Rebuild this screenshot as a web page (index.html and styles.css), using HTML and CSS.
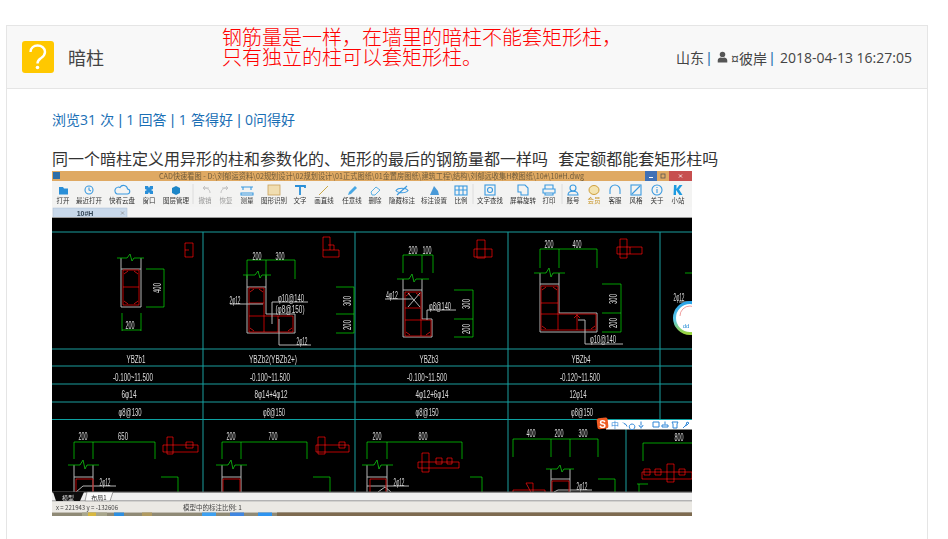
FILE: index.html
```html
<!DOCTYPE html>
<html lang="zh-CN">
<head>
    <meta charset="UTF-8">
    <meta name="viewport" content="width=device-width, initial-scale=1.0">
    <title>暗柱</title>
    <link rel="stylesheet" href="styles.css">
</head>
<body>
    <div class="panel">
        <div class="panel-heading">
            <svg class="q-icon" viewBox="0 0 32 32">
                <rect width="32" height="32" rx="3" fill="#ffc800"/>
                <path d="M8.5 11C8.5 6.5 12 4.5 15.5 4.5C19.5 4.5 23 7 23 11C23 14.5 20.5 16 18.5 17.5C16.5 19 15.5 20 15.5 22.5" fill="none" stroke="#fff" stroke-width="2.4"/>
                <circle cx="15.5" cy="26.5" r="1.8" fill="#fff"/>
            </svg>
            <h1 class="title">暗柱</h1>
            <div class="note">钢筋量是一样，在墙里的暗柱不能套矩形柱，<br>只有独立的柱可以套矩形柱。</div>
            <div class="meta">
                <span>山东</span><span class="bar">|</span>
                <svg class="user-icon" viewBox="0 0 12 12">
                    <circle cx="6" cy="3.2" r="3" fill="#555"/>
                    <path d="M0.8 12V9.6C0.8 7.6 3 7 4.2 6.6C5.2 7.2 6.8 7.2 7.8 6.6C9 7 11.2 7.6 11.2 9.6V12Z" fill="#555"/>
                </svg>
                <span class="user">¤彼岸</span><span class="bar">|</span>
                <span>2018-04-13 16:27:05</span>
            </div>
        </div>
        <div class="panel-body">
            <p class="stats">浏览31 次 <span class="pipe">|</span> 1 回答 <span class="pipe">|</span> 1 答得好 <span class="pipe">|</span> 0问得好</p>
            <p class="question">同一个暗柱定义用异形的柱和参数化的、矩形的最后的钢筋量都一样吗&nbsp; 套定额都能套矩形柱吗</p>
            <svg class="shot" viewBox="0 0 640 345" width="640" height="345">
                <defs>
                    <filter id="soft" x="0" y="0" width="100%" height="100%"><feGaussianBlur stdDeviation="0.32"/></filter>
                    <linearGradient id="ring" x1="0" y1="0" x2="0" y2="1">
                        <stop offset="0" stop-color="#2aa4e8"/><stop offset="0.55" stop-color="#5ac8e8"/><stop offset="1" stop-color="#9ad43c"/>
                    </linearGradient>
                    <clipPath id="cad-area"><rect x="0" y="47" width="640" height="274"/></clipPath>
                </defs>
                <g filter="url(#soft)">
                    <!-- window title -->
                    <rect width="640" height="10" fill="#dfa963"/>
                    <rect x="1" y="1" width="7" height="7" fill="#2f6ea8"/>
                    <text class="t-title" x="107" y="8" textLength="425" lengthAdjust="spacingAndGlyphs">CAD快速看图 - D:\刘郁运资料\02规划设计\02规划设计\01正式图纸\01金置房图纸\建筑工程\结构\刘郁远收集H教图纸\10#\10#H.dwg</text>
                    <rect x="593" y="0" width="12" height="10" fill="#3f6fb5"/>
                    <rect x="597" y="6" width="4" height="1" fill="#fff"/>
                    <rect x="609" y="3" width="4" height="4" fill="none" stroke="#555" stroke-width="0.8"/>
                    <rect x="617" y="0" width="23" height="10" fill="#c75050"/>
                    <path d="M627 3.500l3 3m0-3l-3 3" stroke="#fff" stroke-width="0.8"/>

                    <!-- toolbar -->
                    <rect y="10" width="640" height="26" fill="#f3f3f2"/>
                    <path class="tb-div" d="M141 13V33M421 13V33M510 13V33"/>
                    <path d="M7 16h4l1 1.500h4v6h-9z" fill="#2a8fd8"/>
                    <circle class="tb-i" cx="37" cy="19" r="4"/><path class="tb-i" d="M37 16.500V19l2 1"/>
                    <path class="tb-i" d="M65 23h10a2.500 2.500 0 0 0 .5-5a4 4 0 0 0-7.500-1.500a3.500 3.500 0 0 0-3 6.500z"/>
                    <path d="M93 15h3l1 2l1-2h3v3l-2 1l2 1v3h-3l-1-2l-1 2h-3v-3l2-1l-2-1z" fill="#2a8fd8"/>
                    <path d="M124 15l4 2v5l-4 2l-4-2v-5z" fill="#1f86c8"/>
                    <path class="tb-g" d="M157 17h-6l2-2m-2 2l2 2M152 17c4 0 6 2 6 5"/>
                    <path class="tb-g" d="M170 17h6l-2-2m2 2l-2 2M175 17c-4 0-6 2-6 5"/>
                    <path class="tb-i" d="M189 16h12M189 22h12v2h-12zM191 16v3M199 16v3"/>
                    <rect x="216" y="14" width="12" height="10" fill="#f0ddb0" stroke="#c9a05a" stroke-width="0.8"/>
                    <path d="M243 15h10v2M248 15v9" fill="none" stroke="#2a8fd8" stroke-width="1.800"/>
                    <path d="M267 24l9-9" stroke="#c9a84a" stroke-width="1"/>
                    <path d="M296 24l1-3l6-6l2 2l-6 6z" fill="#4aa8e4"/>
                    <path d="M319 21l5-5l4 3l-5 5h-3z" fill="none" stroke="#5ab0e4" stroke-width="1"/>
                    <path class="tb-i" d="M344 19.500c2-3 10-3 12 0c-2 3-10 3-12 0zM345 24l10-9"/>
                    <path d="M378 24l4-9l4 5l1 4z" fill="#4a9ad8"/>
                    <rect class="tb-i" x="403" y="15" width="12" height="9"/><path class="tb-i" d="M403 19h12M407 15v9M411 15v9"/>
                    <rect class="tb-i" x="433" y="14" width="10" height="10"/><circle class="tb-i" cx="438" cy="19" r="2.500"/>
                    <path class="tb-i" d="M466 14h7l3 3v7h-7v-3h-3z"/>
                    <path class="tb-i" d="M493 18v-4h8v4M491 18h12v4h-12zM493 22v2h8v-2"/>
                    <circle class="tb-i" cx="521" cy="17" r="3"/><path class="tb-i" d="M516 24c0-5 10-5 10 0z"/>
                    <ellipse cx="542" cy="19" rx="5" ry="4.500" fill="#f4e4b0" stroke="#c9962a" stroke-width="0.9"/>
                    <path class="tb-i" d="M558 21v-2a5 5 0 0 1 10 0v2M558 19v4M568 19v4"/>
                    <rect class="tb-i" x="579" y="14" width="10" height="10"/><path class="tb-i" d="M580 23l8-8"/>
                    <circle class="tb-i" cx="605" cy="19" r="5"/><path class="tb-i" d="M605 18v4M605 16v1"/>
                    <path d="M622 14h2.500v4l3-4h3l-3.500 4.500l3.500 5.500h-3l-3.500-5v5h-2.500z" fill="#1f9ae0"/>

                    <text class="t-tb" x="11" y="32">打开</text>
                    <text class="t-tb" x="37" y="32">最近打开</text>
                    <text class="t-tb" x="70" y="32">快看云盘</text>
                    <text class="t-tb" x="97" y="32">窗口</text>
                    <text class="t-tb" x="124" y="32">图层管理</text>
                    <text class="t-tb t-off" x="153" y="32">撤销</text>
                    <text class="t-tb t-off" x="174" y="32">恢复</text>
                    <text class="t-tb" x="195" y="32">测量</text>
                    <text class="t-tb" x="222" y="32">图形识别</text>
                    <text class="t-tb" x="248" y="32">文字</text>
                    <text class="t-tb" x="272" y="32">画直线</text>
                    <text class="t-tb" x="300" y="32">任意线</text>
                    <text class="t-tb" x="323" y="32">删除</text>
                    <text class="t-tb" x="350" y="32">隐藏标注</text>
                    <text class="t-tb" x="382" y="32">标注设置</text>
                    <text class="t-tb" x="409" y="32">比例</text>
                    <text class="t-tb" x="438" y="32">文字查找</text>
                    <text class="t-tb" x="471" y="32">屏幕旋转</text>
                    <text class="t-tb" x="497" y="32">打印</text>
                    <text class="t-tb" x="521" y="32">账号</text>
                    <text class="t-tb t-vip" x="542" y="32">会员</text>
                    <text class="t-tb" x="563" y="32">客服</text>
                    <text class="t-tb" x="584" y="32">风格</text>
                    <text class="t-tb" x="605" y="32">关于</text>
                    <text class="t-tb" x="626" y="32">小站</text>

                    <!-- drawing tab -->
                    <rect y="36" width="640" height="11" fill="#f4f4f4"/>
                    <rect x="1" y="37" width="74" height="10" fill="#c8d8ea" stroke="#a8bcd4" stroke-width="0.5"/>
                    <text class="t-tab" x="33" y="45">10#H</text>
                    <path d="M69 40.500l3 3m0-3l-3 3" stroke="#888" stroke-width="0.7"/>
                    <rect y="46" width="640" height="1" fill="#9a9a9a"/>

                    <!-- drawing -->
                    <rect y="47" width="640" height="274" fill="#000"/>
                    <g clip-path="url(#cad-area)">
                        <path class="c-grid" d="M0 61H640M0 178H640M0 195H640M0 213H640M0 231H640M0 248.500H640M151 61V321M303 61V321M456 61V321M608 61V248M574 248V321"/>

                        <!-- upper row: outlines and rebar -->
                        <path class="c-gray" d="M69 87V136H89V87M69 98H89"/>
                        <path class="c-gray" d="M195 104V162H243V143H214V104M195 116H214"/>
                        <path class="c-gray" d="M351 108V166H380V148H370V108M351 119H370"/>
                        <path class="c-gray" d="M488 102V161H545V142H507V102M488 113H507"/>
                        <path class="c-red" d="M71 99H87V134H71ZM71 116H87"/>
                        <path class="c-red" d="M197 117H212V145H241V161H197ZM197 132H212M197 145H212M212 145V161M226 145V161"/>
                        <path class="c-red" d="M353 121H369V149H379V165H353ZM353 137H369M353 149H369M369 149V165"/>
                        <path class="c-red" d="M489 115H506V143H544V159H489ZM489 132H506M489 143H506M506 143V159M525 143V159"/>
                        <!-- stirrup hooks -->
                        <path class="c-red" d="M72 103l4-3M86 103l-4-3M72 130l4 3M86 130l-4 3M198 121l4-3M211 121l-4-3M198 157l4 3M240 157l-4 3M354 125l4-3M368 125l-4-3M354 161l4 3M378 161l-4 3M490 119l4-3M505 119l-4-3M490 155l4 3M543 155l-4 3M522 147l3-3l3 3"/>

                        <!-- section keys -->
                        <path class="c-red" d="M133 72H141V86H133ZM133 79H137"/>
                        <path class="c-red" d="M271 66H278V79M271 66V86H287V79H271M276 74H282V79"/>
                        <path class="c-red" d="M425 69H433V87H425ZM422 78H440V86H422Z"/>
                        <path class="c-red" d="M568 68H575V87H568ZM565 76H590V83H565ZM578 76V83"/>

                        <!-- dimensions -->
                        <path class="c-grn" d="M65 87H75L78 83L80 90L82 87H92M94 98H112V136H94M70 142V160M89 142V160M70 159H89"/>
                        <path class="c-grn" d="M195 89H243M195 89V108M214 89V108M243 89V108M191 104H203L206 100L208 107L210 104H219M284 116H302V162H284M284 143H302"/>
                        <path class="c-grn" d="M351 84H381M351 84V102M370 84V102M381 84V102M345 108H357L360 103L362 111L364 108H377M402 119H421V166H402M402 148H421"/>
                        <path class="c-grn" d="M488 78H545M488 78V97M507 78V97M545 78V97M482 102H494L497 97L499 106L501 102H513M550 113H569V161H550M550 142H569M633 102H640"/>

                        <!-- leaders -->
                        <path class="c-gray" d="M178 133H211M220 153V131H256M227 148V174H259M333 128H361M375 149V139H404M356 122L368 136M368 122L356 136M533 149V173H571M526 149H533M627 131H640"/>

                        <!-- upper row labels -->
                        <text class="t-cad" x="78" y="158" textLength="9" lengthAdjust="spacingAndGlyphs">200</text>
                        <text class="t-cad" transform="translate(109 117) rotate(-90)" textLength="10" lengthAdjust="spacingAndGlyphs">400</text>
                        <text class="t-cad" x="205" y="89" textLength="9" lengthAdjust="spacingAndGlyphs">200</text>
                        <text class="t-cad" x="228" y="89" textLength="9" lengthAdjust="spacingAndGlyphs">300</text>
                        <text class="t-cad" x="183" y="133" textLength="11" lengthAdjust="spacingAndGlyphs">2φ12</text>
                        <text class="t-cad" x="239" y="131" textLength="26" lengthAdjust="spacingAndGlyphs">φ10@140</text>
                        <text class="t-cad" x="238" y="142" textLength="29" lengthAdjust="spacingAndGlyphs">(φ8@150)</text>
                        <text class="t-cad" x="250" y="174" textLength="11" lengthAdjust="spacingAndGlyphs">2φ12</text>
                        <text class="t-cad" transform="translate(299 130) rotate(-90)" textLength="10" lengthAdjust="spacingAndGlyphs">300</text>
                        <text class="t-cad" transform="translate(299 154) rotate(-90)" textLength="10" lengthAdjust="spacingAndGlyphs">200</text>
                        <text class="t-cad" x="361" y="83" textLength="9" lengthAdjust="spacingAndGlyphs">200</text>
                        <text class="t-cad" x="375" y="83" textLength="9" lengthAdjust="spacingAndGlyphs">100</text>
                        <text class="t-cad" x="340" y="128" textLength="12" lengthAdjust="spacingAndGlyphs">4φ12</text>
                        <text class="t-cad" x="388" y="139" textLength="22" lengthAdjust="spacingAndGlyphs">φ8@140</text>
                        <text class="t-cad" transform="translate(418 133) rotate(-90)" textLength="10" lengthAdjust="spacingAndGlyphs">300</text>
                        <text class="t-cad" transform="translate(418 158) rotate(-90)" textLength="10" lengthAdjust="spacingAndGlyphs">200</text>
                        <text class="t-cad" x="497" y="77" textLength="9" lengthAdjust="spacingAndGlyphs">200</text>
                        <text class="t-cad" x="525" y="77" textLength="9" lengthAdjust="spacingAndGlyphs">400</text>
                        <text class="t-cad" transform="translate(565 128) rotate(-90)" textLength="10" lengthAdjust="spacingAndGlyphs">300</text>
                        <text class="t-cad" transform="translate(565 152) rotate(-90)" textLength="10" lengthAdjust="spacingAndGlyphs">200</text>
                        <text class="t-cad" x="551" y="172" textLength="26" lengthAdjust="spacingAndGlyphs">φ10@140</text>
                        <text class="t-cad" x="627" y="130" textLength="11" lengthAdjust="spacingAndGlyphs">2φ12</text>

                        <!-- table rows -->
                        <text class="t-cad" x="84" y="192" textLength="19" lengthAdjust="spacingAndGlyphs">YBZb1</text>
                        <text class="t-cad" x="81" y="210" textLength="40" lengthAdjust="spacingAndGlyphs">-0.100~11.500</text>
                        <text class="t-cad" x="77" y="227" textLength="15" lengthAdjust="spacingAndGlyphs">6φ14</text>
                        <text class="t-cad" x="78" y="245" textLength="23" lengthAdjust="spacingAndGlyphs">φ8@130</text>
                        <text class="t-cad" x="221" y="192" textLength="48" lengthAdjust="spacingAndGlyphs">YBZb2(YBZb2+)</text>
                        <text class="t-cad" x="218" y="210" textLength="40" lengthAdjust="spacingAndGlyphs">-0.100~11.500</text>
                        <text class="t-cad" x="219" y="227" textLength="33" lengthAdjust="spacingAndGlyphs">8φ14+4φ12</text>
                        <text class="t-cad" x="222" y="245" textLength="22" lengthAdjust="spacingAndGlyphs">φ8@150</text>
                        <text class="t-cad" x="377" y="192" textLength="19" lengthAdjust="spacingAndGlyphs">YBZb3</text>
                        <text class="t-cad" x="375" y="210" textLength="40" lengthAdjust="spacingAndGlyphs">-0.100~11.500</text>
                        <text class="t-cad" x="380" y="227" textLength="33" lengthAdjust="spacingAndGlyphs">4φ12+6φ14</text>
                        <text class="t-cad" x="375" y="245" textLength="23" lengthAdjust="spacingAndGlyphs">φ8@150</text>
                        <text class="t-cad" x="529" y="192" textLength="19" lengthAdjust="spacingAndGlyphs">YBZb4</text>
                        <text class="t-cad" x="528" y="210" textLength="40" lengthAdjust="spacingAndGlyphs">-0.120~11.500</text>
                        <text class="t-cad" x="526" y="227" textLength="17" lengthAdjust="spacingAndGlyphs">12φ14</text>
                        <text class="t-cad" x="530" y="245" textLength="22" lengthAdjust="spacingAndGlyphs">φ8@150</text>

                        <!-- lower row -->
                        <path class="c-gray" d="M22 294V321M41 294V321M22 306H41M170 294V321M189 294V321M170 306H189M315 294V321M335 294V321M315 306H335M499 298V321M518 298V321M499 308H518M31 315H64M31 315L24 321M315 315H357M326 321L333 316L339 321M506 319H540M506 319L502 321"/>
                        <path class="c-red" d="M24 308H41V325H24ZM171 308H188V325H171ZM318 308H334V325H318ZM500 310H517V325H500Z"/>
                        <path class="c-red" d="M115 266H121V283H115ZM111 274H146V281H111ZM134 271H141V277H134ZM264 274H297V281H264ZM266 266H273V283H266ZM287 271H293V277H287Z"/>
                        <path class="c-red" d="M370 282H377V301H370ZM366 291H407V297H366ZM384 287H390V293H384ZM395 287H400V293H395Z"/>
                        <path class="c-red" d="M461 321V319H493V325M474 312H481V325ZM590 301H640V308H590ZM615 293H622V311H615ZM592 298H598V304H592ZM603 298H609V304H603ZM627 298H633V304H627Z"/>
                        <path class="c-grn" d="M22 271H103M22 271V288M41 271V288M103 271V288M16 294H28L31 289L33 298L35 294H47M109 306H126V321M170 271H255M170 271V288M189 271V288M255 271V288M164 294H176L179 289L181 298L183 294H195M261 306H278V321"/>
                        <path class="c-grn" d="M315 271H410M315 271V288M335 271V288M410 271V288M310 294H322L325 289L327 298L329 294H341M418 306H430V321"/>
                        <path class="c-grn" d="M461 268H546M461 268V286M499 268V286M518 268V286M546 268V286M494 298H505L508 294L510 301L512 298H522M546 308H563V321"/>
                        <path class="c-grn" d="M591 272H640M591 272V290M585 313H596M587 313V321"/>
                        <text class="t-cad" x="31" y="269" textLength="9" lengthAdjust="spacingAndGlyphs">200</text>
                        <text class="t-cad" x="71" y="269" textLength="10" lengthAdjust="spacingAndGlyphs">650</text>
                        <text class="t-cad" x="53" y="315" textLength="11" lengthAdjust="spacingAndGlyphs">2φ12</text>
                        <text class="t-cad" x="179" y="269" textLength="9" lengthAdjust="spacingAndGlyphs">200</text>
                        <text class="t-cad" x="221" y="269" textLength="9" lengthAdjust="spacingAndGlyphs">700</text>
                        <text class="t-cad" x="325" y="269" textLength="9" lengthAdjust="spacingAndGlyphs">200</text>
                        <text class="t-cad" x="371" y="269" textLength="9" lengthAdjust="spacingAndGlyphs">800</text>
                        <text class="t-cad" x="347" y="315" textLength="11" lengthAdjust="spacingAndGlyphs">2φ12</text>
                        <text class="t-cad" x="479" y="266" textLength="9" lengthAdjust="spacingAndGlyphs">400</text>
                        <text class="t-cad" x="507" y="266" textLength="9" lengthAdjust="spacingAndGlyphs">200</text>
                        <text class="t-cad" x="531" y="266" textLength="9" lengthAdjust="spacingAndGlyphs">300</text>
                        <text class="t-cad" x="530" y="319" textLength="11" lengthAdjust="spacingAndGlyphs">2φ12</text>
                        <text class="t-cad" x="627" y="270" textLength="9" lengthAdjust="spacingAndGlyphs">800</text>

                        <!-- floating ball -->
                        <circle cx="638" cy="147" r="15.500" fill="#fff" stroke="url(#ring)" stroke-width="3"/>
                        <path class="ball-arc" d="M628 145a10 10 0 0 1 20 0"/>
                        <text class="t-ball" x="634" y="157">dd</text>
                    </g>

                    <!-- input method bar -->
                    <rect x="554" y="249" width="86" height="9.500" fill="#fff"/>
                    <rect x="545" y="247" width="11" height="11" rx="2" fill="#ee5a22" transform="rotate(-6 550 252)"/>
                    <text class="t-sg" x="550.500" y="256.500">S</text>
                    <text class="t-ime" x="563" y="257">中</text>
                    <path class="ime" d="M571 251.500l1 1l2 1l1 2M580 253a2.800 2.800 0 1 0 .1 0M589 250.500v4M587 254a2 2 0 0 0 4 0M589 256v1.500M601 251h6v5h-6zM610 256h6v-2h-6zM613 250.500v3M620 251h6l-1 2v4h-4v-4zM631 257l3-3l1-3l2 1l-2 2l-2 1"/>

                    <!-- layout tabs and status -->
                    <rect y="321" width="640" height="9" fill="#f0f0f0"/>
                    <rect y="320.500" width="640" height="1.200" fill="#666"/>
                    <rect y="329.500" width="640" height="1" fill="#777"/>
                    <path d="M1 321H32L28 330H4Z" fill="#111"/>
                    <text class="t-tab2" x="16" y="328.500">模型</text>
                    <path d="M35 321H61L58 330H33Z" fill="#fbfbfb" stroke="#666" stroke-width="0.6"/>
                    <text class="t-tab3" x="47" y="328.500">布局1</text>
                    <rect y="330.500" width="640" height="11" fill="#ebe9e4"/>
                    <text class="t-st" x="4" y="338.500" textLength="62" lengthAdjust="spacingAndGlyphs">x = 221943 y = -132606</text>
                    <text class="t-st" x="131" y="338.500">模型中的标注比例: 1</text>

                    <!-- desktop taskbar strip -->
                    <rect y="341.500" width="640" height="3.500" fill="#8f8a76"/>
                    <rect x="30" y="341.500" width="25" height="3.500" fill="#a8a68c"/>
                    <rect x="36" y="341.500" width="8" height="3.500" fill="#d8b840"/>
                    <rect x="62" y="341.500" width="10" height="3.500" fill="#2f8fe0"/>
                    <rect x="90" y="341.500" width="10" height="3.500" fill="#b09a60"/>
                    <rect x="150" y="341.500" width="14" height="3.500" fill="#3ea0f0"/>
                    <rect x="178" y="341.500" width="14" height="3.500" fill="#3f86e0"/>
                    <rect x="206" y="341.500" width="14" height="3.500" fill="#2f94f0"/>
                    <rect x="225" y="341.500" width="415" height="3.500" fill="#7d6a50"/>
                </g>
            </svg>
        </div>
    </div>
</body>
</html>
```

FILE: styles.css
```css
html, body {
    height: 539px;
    overflow: hidden;
}
body {
    margin: 0;
    padding-top: 25px;
    box-sizing: border-box;
    background-color: #fff;
    color: #444;
    font-family: "Open Sans", "Noto Sans CJK SC", sans-serif;
}
.panel {
    width: 922px;
    height: 514px;
    margin-left: 6px;
    box-sizing: border-box;
    border: 1px solid #e5e5e5;
    border-bottom: none;
}
.panel-heading {
    position: relative;
    display: flex;
    align-items: center;
    height: 62px;
    padding: 0 15px;
    background-color: #f8f8f8;
    border-bottom: 1px solid #e5e5e5;
}
.q-icon {
    width: 32px;
    height: 32px;
    flex-shrink: 0;
}
.title {
    margin: 0 0 0 14px;
    font-size: 18px;
    font-weight: 400;
    color: #444;
}
.note {
    position: absolute;
    left: 215px;
    top: 1px;
    font-size: 20px;
    line-height: 20px;
    color: #f00;
    font-family: "Noto Sans CJK SC", sans-serif;
    font-weight: 300;
}
.meta {
    display: flex;
    align-items: center;
    margin-left: auto;
    font-size: 14px;
    color: #444;
}
.bar {
    margin: 0 6px 0 3px;
    font-family: "Liberation Sans", sans-serif;
    font-size: 15px;
    color: #2f78b4;
}
.user-icon {
    width: 11px;
    height: 12px;
    margin-right: 3px;
}
.user {
    position: relative;
    top: 1px;
}
.panel-body {
    padding: 21px 45px 0;
}
.stats {
    margin: 0;
    font-size: 14px;
    line-height: 20px;
    color: #1a6fb5;
    word-spacing: 0.6px;
}
.pipe {
    font-family: "Liberation Sans", sans-serif;
}
.question {
    margin: 18px 0 0;
    font-size: 16px;
    line-height: 22px;
    color: #333;
    white-space: nowrap;
    word-spacing: 1px;
}
.shot {
    display: block;
    margin-top: 1px;
}

/* picture: CAD viewer window */
.shot text {
    font-family: "Liberation Sans", "Noto Sans CJK SC", sans-serif;
    text-anchor: middle;
}
.c-grid,
.c-gray,
.c-red,
.c-grn,
.tb-div,
.tb-g,
.ime,
.ball-arc {
    fill: none;
    stroke-width: 1;
}
.c-grid {
    stroke: #10a0a0;
}
.c-gray {
    stroke: #b4b4b4;
}
.c-red {
    stroke: #b80d0d;
}
.c-grn {
    stroke: #0ca00c;
}
.tb-div {
    stroke: #dcdcdc;
}
.tb-i {
    fill: none;
    stroke: #3a9ae0;
    stroke-width: 1.1;
}
.tb-g {
    stroke: #c4c4c4;
}
.ime {
    stroke: #2f86d8;
}
.ball-arc {
    stroke: #f0a0a0;
}
.shot .t-title {
    font-size: 8px;
    fill: #705c3c;
    text-anchor: start;
    font-family: "Noto Sans CJK SC", sans-serif;
}
.shot .t-tb {
    font-size: 6.5px;
    fill: #333;
    font-family: "Noto Sans CJK SC", sans-serif;
}
.shot .t-off {
    fill: #999;
}
.shot .t-vip {
    fill: #c9962a;
}
.shot .t-tab {
    font-size: 7px;
    font-weight: 700;
    fill: #345;
}
.shot .t-cad {
    font-size: 10px;
    fill: #dcdcdc;
}
.shot .t-ball {
    font-size: 6px;
    fill: #2a8fd8;
}
.shot .t-sg {
    font-size: 10px;
    font-weight: 700;
    fill: #fff;
}
.shot .t-ime {
    font-size: 8px;
    fill: #2f86d8;
    font-family: "Noto Sans CJK SC", sans-serif;
}
.shot .t-tab2 {
    font-size: 6px;
    fill: #ddd;
    font-family: "Noto Sans CJK SC", sans-serif;
}
.shot .t-tab3 {
    font-size: 6px;
    fill: #333;
    font-family: "Noto Sans CJK SC", sans-serif;
}
.shot .t-st {
    font-size: 6.5px;
    fill: #444;
    text-anchor: start;
    font-family: "Noto Sans CJK SC", sans-serif;
}
```
